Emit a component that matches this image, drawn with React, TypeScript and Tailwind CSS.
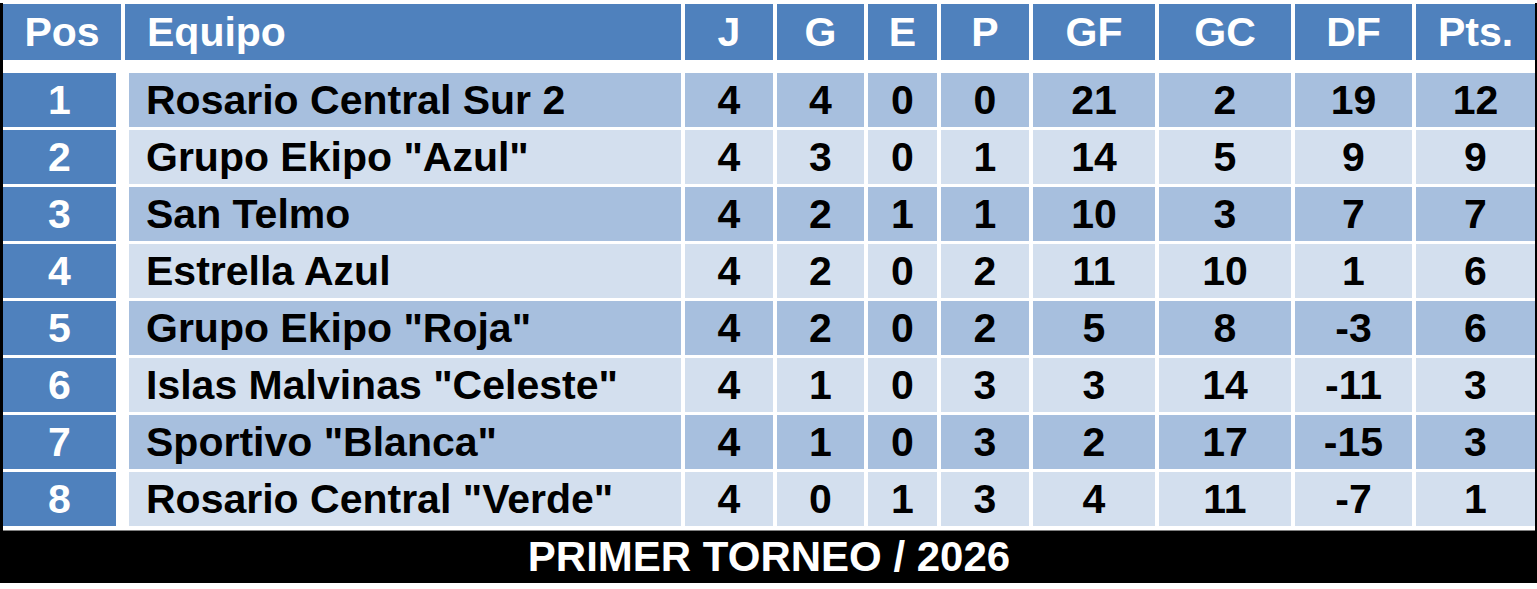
const rows = [
  { pos: 1, team: "Rosario Central Sur 2", j: 4, g: 4, e: 0, p: 0, gf: 21, gc: 2, df: 19, pts: 12 },
  { pos: 2, team: 'Grupo Ekipo "Azul"', j: 4, g: 3, e: 0, p: 1, gf: 14, gc: 5, df: 9, pts: 9 },
  { pos: 3, team: "San Telmo", j: 4, g: 2, e: 1, p: 1, gf: 10, gc: 3, df: 7, pts: 7 },
  { pos: 4, team: "Estrella Azul", j: 4, g: 2, e: 0, p: 2, gf: 11, gc: 10, df: 1, pts: 6 },
  { pos: 5, team: 'Grupo Ekipo "Roja"', j: 4, g: 2, e: 0, p: 2, gf: 5, gc: 8, df: -3, pts: 6 },
  { pos: 6, team: 'Islas Malvinas "Celeste"', j: 4, g: 1, e: 0, p: 3, gf: 3, gc: 14, df: -11, pts: 3 },
  { pos: 7, team: 'Sportivo "Blanca"', j: 4, g: 1, e: 0, p: 3, gf: 2, gc: 17, df: -15, pts: 3 },
  { pos: 8, team: 'Rosario Central "Verde"', j: 4, g: 0, e: 1, p: 3, gf: 4, gc: 11, df: -7, pts: 1 },
];

// widths of the stat columns: J G E P GF GC DF Pts.
const statCols = [
  { label: "J", w: "w-[88px]" },
  { label: "G", w: "w-[87px]" },
  { label: "E", w: "w-[69px]" },
  { label: "P", w: "w-[88px]" },
  { label: "GF", w: "w-[122px]" },
  { label: "GC", w: "w-[132px]" },
  { label: "DF", w: "w-[117px]" },
  { label: "Pts.", w: "w-[119px]" },
];

export default function App() {
  return (
    <div
      className="w-[1537px] h-[589px] bg-white pt-[3px]"
      style={{ fontFamily: '"Liberation Sans", Arial, sans-serif' }}
    >
      <div className="w-[1537px] border-l-[3px] border-r-[2px] border-black pt-[1px] font-bold">
        {/* header */}
        <div className="flex gap-[4px] h-[56px] text-white text-[41px] leading-none">
          <div className="w-[118px] bg-[#4f81bd] flex items-center justify-center pt-[1px]">Pos</div>
          <div className="w-[556px] bg-[#4f81bd] flex items-center pl-[22px] pt-[1px]">Equipo</div>
          {statCols.map((c) => (
            <div key={c.label} className={`${c.w} bg-[#4f81bd] flex items-center justify-center pt-[1px]`}>
              {c.label}
            </div>
          ))}
        </div>

        {/* rows */}
        <div className="flex flex-col gap-[3px] mt-[13px] text-[41px] leading-none">
          {rows.map((r, i) => {
            const bg = i % 2 === 0 ? "bg-[#a7bfde]" : "bg-[#d3dfee]";
            const vals = [r.j, r.g, r.e, r.p, r.gf, r.gc, r.df, r.pts];
            return (
              <div key={r.pos} className="flex gap-[4px] h-[54px]">
                <div className="w-[113px] mr-[9px] bg-[#4f81bd] text-white flex items-center justify-center pt-[1px]">
                  {r.pos}
                </div>
                <div className={`w-[552px] ${bg} text-black flex items-center pl-[17px] pt-[1px] whitespace-nowrap`}>
                  {r.team}
                </div>
                {statCols.map((c, k) => (
                  <div key={c.label} className={`${c.w} ${bg} text-black flex items-center justify-center pt-[1px]`}>
                    {vals[k]}
                  </div>
                ))}
              </div>
            );
          })}
        </div>

        {/* footer */}
        <div className="mt-[4px] border-t border-[#808080] h-[53px] bg-black text-white text-[42px] leading-none flex items-center justify-center">
          PRIMER TORNEO / 2026
        </div>
      </div>
    </div>
  );
}
